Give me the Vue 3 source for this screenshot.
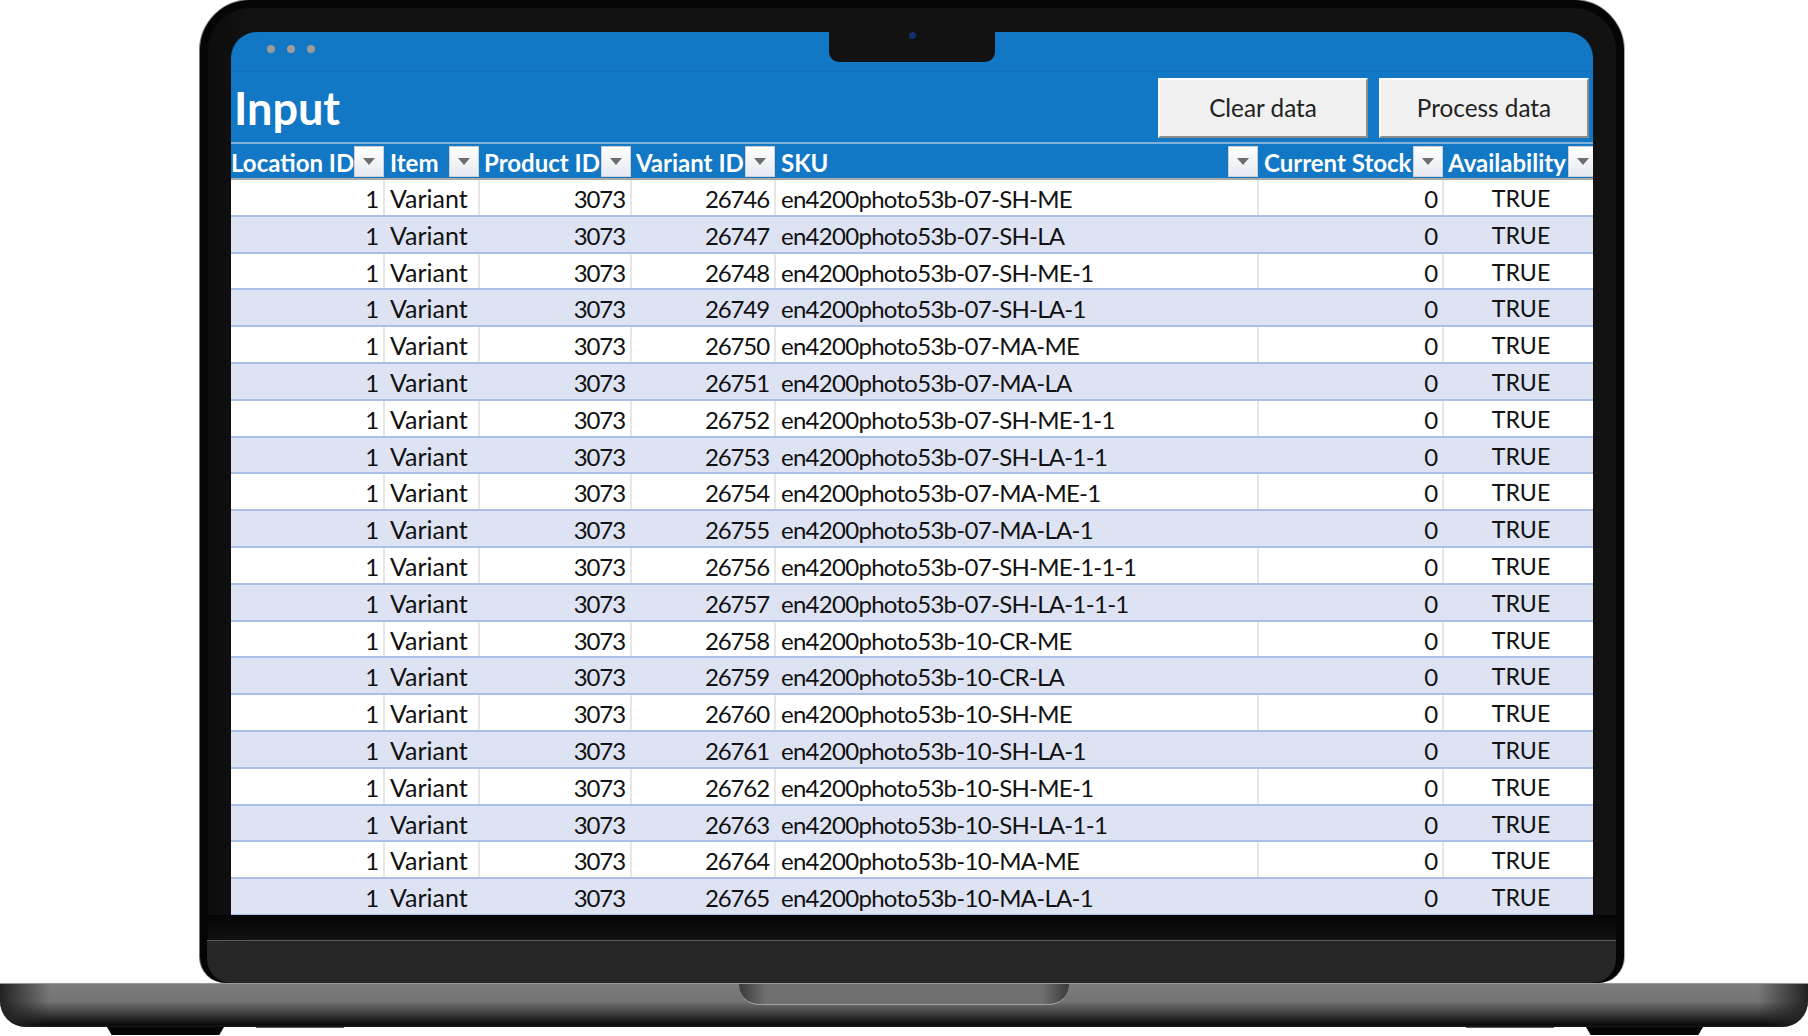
<script setup>
const columns = [
  { label: 'Location ID' },
  { label: 'Item' },
  { label: 'Product ID' },
  { label: 'Variant ID' },
  { label: 'SKU' },
  { label: 'Current Stock' },
  { label: 'Availability' }
]
const suffixes = [
  '07-SH-ME', '07-SH-LA', '07-SH-ME-1', '07-SH-LA-1', '07-MA-ME', '07-MA-LA', '07-SH-ME-1-1',
  '07-SH-LA-1-1', '07-MA-ME-1', '07-MA-LA-1', '07-SH-ME-1-1-1', '07-SH-LA-1-1-1', '10-CR-ME',
  '10-CR-LA', '10-SH-ME', '10-SH-LA-1', '10-SH-ME-1', '10-SH-LA-1-1', '10-MA-ME', '10-MA-LA-1'
]
const rows = suffixes.map((s, i) => ({ variant: 26746 + i, sku: 'en4200photo53b-' + s }))
</script>

<template>
  <div class="page">
    <div class="lid">
      <div class="bezel">
        <div class="screen">
          <div class="notch"><span class="camera"></span></div>
          <div class="titlebar">
            <span class="dot"></span><span class="dot"></span><span class="dot"></span>
          </div>
          <div class="banner">
            <h1 class="title">Input</h1>
            <div class="actions">
              <button class="action">Clear data</button>
              <button class="action">Process data</button>
            </div>
          </div>
          <div class="grid head">
            <div v-for="c in columns" :key="c.label" class="hcell">
              <span class="hlabel">{{ c.label }}</span>
              <span class="filter"><svg width="12" height="7" viewBox="0 0 12 7"><path d="M0 0H12L6 7Z" fill="#6e6e6e" /></svg></span>
            </div>
          </div>
          <div v-for="r in rows" :key="r.variant" class="grid row">
            <div class="cell num">1</div>
            <div class="cell item">Variant</div>
            <div class="cell num">3073</div>
            <div class="cell num">{{ r.variant }}</div>
            <div class="cell sku">{{ r.sku }}</div>
            <div class="cell num">0</div>
            <div class="cell mid">TRUE</div>
          </div>
        </div>
        <div class="underscreen"></div>
      </div>
      <div class="chin"></div>
    </div>
    <div class="base">
      <div class="thumb"></div>
    </div>
    <div class="feet">
      <span class="foot"></span>
      <span class="pad"></span>
      <span class="spacer"></span>
      <span class="pad"></span>
      <span class="foot"></span>
    </div>
  </div>
</template>

<style>
html, body { margin: 0; background: #fff; }
</style>

<style scoped>
.page {
  width: 1808px;
  height: 1036px;
  overflow: hidden;
  background: #fff;
  font-family: Lato, "Open Sans", sans-serif;
  color: #111;
}
.lid {
  width: 1424px;
  margin-left: 200px;
  height: 983px;
  box-sizing: border-box;
  background: #050505;
  border-radius: 50px 50px 26px 26px / 50px 50px 26px 26px;
  box-shadow: 0 -1px 0 #9a9a9a, 1px 0 0 #a8a8a8, -1px 0 0 #777;
  padding: 8px 8px 0 8px;
  display: flex;
  flex-direction: column;
}
.bezel {
  height: 931px;
  background: linear-gradient(90deg, #0c0c0c, #121212 3%);
  border-radius: 42px 42px 0 0;
  padding: 24px 23px 0 23px;
}
.screen {
  position: relative;
  height: 883px;
  background: #1277c4;
  border-radius: 26px 26px 0 0;
  overflow: hidden;
}
.underscreen {
  height: 24px;
  background: linear-gradient(#050505, #111);
  margin: 0 -23px;
}
.notch {
  position: absolute;
  left: 598px;
  top: 0;
  width: 166px;
  height: 30px;
  background: #121212;
  border-radius: 0 0 10px 10px;
}
.camera {
  position: absolute;
  left: 80px;
  top: 0;
  width: 7px;
  height: 7px;
  border-radius: 50%;
  background: #14306b;
}
.titlebar {
  height: 40px;
  box-sizing: border-box;
  padding: 13px 0 0 36px;
  display: flex;
  gap: 12px;
  align-items: flex-start;
  border-bottom: 1px solid #1172bb;
}
.dot {
  width: 8px;
  height: 8px;
  border-radius: 50%;
  background: #a09c98;
}
.banner {
  height: 72px;
  display: flex;
  align-items: flex-start;
  justify-content: space-between;
  box-sizing: border-box;
  border-bottom: 2px solid #7fb1dd;
}
.title {
  margin: 8px 0 0 3px;
  font-size: 45px;
  line-height: 56px;
  font-weight: 700;
  color: #fff;
}
.actions {
  display: flex;
  gap: 11px;
  padding: 6px 4px 0 0;
}
.action {
  width: 210px;
  height: 60px;
  box-sizing: border-box;
  background: #f0f0f0;
  border: none;
  border-top: 2px solid #fafafa;
  border-left: 2px solid #fafafa;
  border-right: 2px solid #8c8c8c;
  border-bottom: 2px solid #8c8c8c;
  font-family: inherit;
  font-size: 24.3px;
  color: #222;
  padding: 0 0 2px;
}
.grid {
  display: grid;
  grid-template-columns: 154px 95px 152px 144px 483px 185px 149px;
}
.head {
  height: 36px;
  background: #1277c4;
  border-bottom: 2px solid #a9a9a9;
  box-sizing: border-box;
}
.hcell {
  display: flex;
  align-items: center;
  justify-content: space-between;
  overflow: hidden;
  padding-right: 1px;
  min-width: 0;
}
.hcell + .hcell { padding-left: 4px; }
.hcell:nth-child(5), .hcell:nth-child(6), .hcell:nth-child(2) { padding-left: 5px; }
.hlabel {
  font-size: 24px;
  line-height: 34px;
  padding-top: 4px;
  font-weight: 700;
  color: #fff;
  white-space: nowrap;
}
.filter {
  flex: none;
  width: 30px;
  height: 31px;
  margin-top: 1px;
  box-sizing: border-box;
  border: 1px solid #cfcfcf;
  background: linear-gradient(#fff, #e6e9f2);
  display: flex;
  align-items: center;
  justify-content: center;
}
.hcell:last-child .filter { margin-right: -6px; }
.row {
  height: 36.8px;
  box-sizing: border-box;
  background: #fff;
  border-bottom: 2px solid #a9bfe6;
}
.cell {
  font-size: 25px;
  line-height: 31.8px;
  padding-top: 3px;
  white-space: nowrap;
  border-right: 2px solid #e6e6e6;
  min-width: 0;
}
.cell:last-child { border-right: none; }
.row:nth-child(even of .row) { background: #dde3f3; }
.row:nth-child(even of .row) .cell { border-right-color: transparent; }
.item { padding-left: 5px; }
.sku {
  padding-left: 5px;
  font-size: 24px;
  letter-spacing: -0.72px;
}
.num {
  text-align: right;
  padding-right: 5px;
  font-size: 24px;
  letter-spacing: -1.1px;
}
.mid {
  text-align: center;
  padding-left: 5px;
  font-size: 23.2px;
}
.chin {
  height: 44px;
  margin: 0 0 0 -1px;
  background: #262626;
  border-top: 1px solid #5a5a5a;
  border-radius: 0 0 24px 24px;
  box-sizing: border-box;
}
.base {
  height: 44px;
  border-radius: 0 0 26px 26px;
  box-sizing: border-box;
  border-top: 1px solid #9a9a9a;
  background:
    linear-gradient(90deg, #222 0, rgba(50,50,50,0) 50px, rgba(50,50,50,0) 1758px, #222 100%),
    linear-gradient(#7b7b7b 0, #747474 40%, #3c3c3c 70%, #0a0a0a 95%, #1a1a1a 100%);
  display: flex;
  justify-content: center;
}
.thumb {
  width: 330px;
  height: 20px;
  background: linear-gradient(90deg, #3a3a3a, #6f6f6f 8%, #6f6f6f 92%, #3a3a3a);
  border-bottom: 1px solid #a0a0a0;
  border-radius: 0 0 20px 20px;
}
.feet {
  display: flex;
  align-items: flex-start;
  padding: 0 105px 0 107px;
}
.foot {
  width: 117px;
  height: 8px;
  background: #060606;
  clip-path: polygon(0 0, 100% 0, 96% 100%, 4% 100%);
}
.pad {
  width: 88px;
  height: 1px;
  background: #555;
  margin: 0 32px;
}
.spacer { flex: 1; }
</style>
